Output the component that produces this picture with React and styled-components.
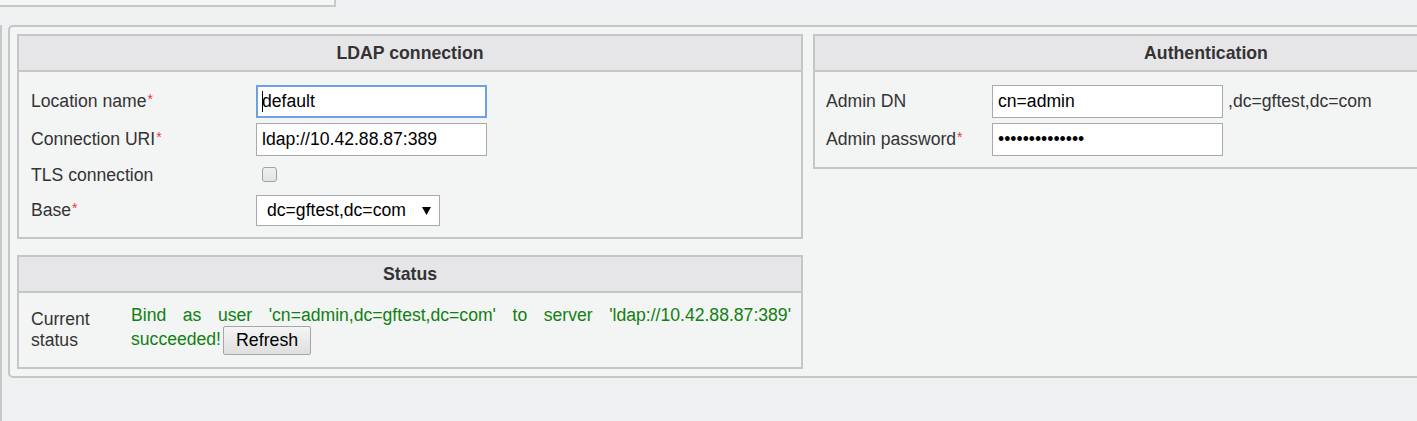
import styled, { createGlobalStyle } from 'styled-components'

const GlobalStyle = createGlobalStyle`
  html, body {
    margin: 0;
    padding: 0;
    background: #eff0f1;
    font-family: "Liberation Sans", Arial, sans-serif;
    color: #333;
    overflow: hidden;
  }
  * { box-sizing: border-box; }
`

const Page = styled.div`
  width: 1417px;
  height: 421px;
  overflow: hidden;
`

const TopStrip = styled.div`
  width: 336px;
  height: 7px;
  background: #f4f5f5;
  border-right: 2px solid #c8c8c8;
  border-bottom: 2px solid #c8c8c8;
`

const Frame = styled.div`
  margin-top: 18px;
  height: 396px;
  border-left: 2px solid #c8c8c8;
  padding-left: 6px;
`

const OuterPanel = styled.div`
  width: 1600px;
  display: flex;
  align-items: flex-start;
  gap: 10px;
  padding: 7px;
  background: #f3f4f4;
  border: 2px solid #c6c6c6;
  border-radius: 5px;
`

const Column = styled.div`
  width: 786px;
  display: flex;
  flex-direction: column;
  gap: 16px;
`

const Panel = styled.section`
  border: 2px solid #c6c6c6;
  background: #f3f4f4;
`

const PanelHeader = styled.div`
  height: 36px;
  display: flex;
  align-items: center;
  justify-content: center;
  background: #e6e6e8;
  border-bottom: 2px solid #c6c6c6;
  font-size: 17.7px;
  font-weight: 700;
  color: #333;
`

const FormBody = styled.div`
  display: flex;
  flex-direction: column;
  gap: 5px;
  padding: 13px 10px 11px ${p => p.$padLeft}px;
`

const Row = styled.div`
  display: grid;
  grid-template-columns: ${p => p.$labelWidth}px auto;
  justify-content: start;
  align-items: center;
  min-height: ${p => p.$height || 0}px;
`

const Label = styled.label`
  font-size: 17.6px;
  color: #333;
`

const Required = styled.span`
  color: #ee3344;
  font-size: 14px;
  vertical-align: top;
  margin-left: 1px;
`

const Field = styled.div`
  display: flex;
  align-items: center;
  position: relative;
`

const TextInput = styled.input`
  width: 231px;
  height: 33px;
  margin: 0;
  padding: 0 ${p => (p.$focused ? 4 : 5)}px;
  font-family: "Liberation Sans", Arial, sans-serif;
  font-size: 17.6px;
  color: #000;
  background: #fff;
  border: ${p => (p.$focused ? '2px solid #6ea0e6' : '1px solid #a9a9a9')};
  outline: none;
`

const Caret = styled.span`
  position: absolute;
  left: 6px;
  top: 6px;
  width: 1px;
  height: 21px;
  background: #000;
`

const Suffix = styled.span`
  margin-left: 5px;
  font-size: 17.6px;
  color: #333;
`

const Checkbox = styled.input`
  appearance: none;
  width: 15px;
  height: 15px;
  margin: -2px 0 0 6px;
  border: 1px solid #a0a0a0;
  border-radius: 3px;
  background: linear-gradient(#f0f0f0, #e3e3e3);
`

const SelectBox = styled.div`
  width: 184px;
  height: 31px;
  display: flex;
  align-items: center;
  justify-content: space-between;
  padding: 0 8px 0 10px;
  background: #fff;
  border: 1px solid #a9a9a9;
  font-size: 17.6px;
  color: #000;
`

const StatusBody = styled.div`
  display: grid;
  grid-template-columns: 100px 1fr;
  align-items: center;
  padding: 11px 10px 12px 12px;
`

const StatusLabel = styled.div`
  font-size: 17.6px;
  line-height: 21px;
  color: #333;
`

const StatusText = styled.div`
  font-size: 17.6px;
  line-height: 22px;
  color: #108010;
  text-align: justify;
`

const Button = styled.button`
  height: 29px;
  margin: 0 0 0 2px;
  padding: 0 12px;
  font-family: "Liberation Sans", Arial, sans-serif;
  font-size: 17.8px;
  color: #000;
  background: linear-gradient(#f5f5f5, #dfdfdf);
  border: 1px solid #a6a6a6;
  border-radius: 2px;
  vertical-align: middle;
`

const Arrow = () => (
  <svg width="9" height="8" viewBox="0 0 9 8">
    <path d="M0 0 H9 L4.5 8 Z" fill="#000" />
  </svg>
)

export default function App() {
  return (
    <>
      <GlobalStyle />
      <Page>
        <TopStrip />
        <Frame>
          <OuterPanel>
            <Column>
              <Panel>
                <PanelHeader>LDAP connection</PanelHeader>
                <FormBody $padLeft={12}>
                  <Row $labelWidth={225}>
                    <Label>Location name<Required>*</Required></Label>
                    <Field>
                      <TextInput $focused defaultValue="default" />
                      <Caret />
                    </Field>
                  </Row>
                  <Row $labelWidth={225}>
                    <Label>Connection URI<Required>*</Required></Label>
                    <Field>
                      <TextInput defaultValue="ldap://10.42.88.87:389" />
                    </Field>
                  </Row>
                  <Row $labelWidth={225} $height={29}>
                    <Label>TLS connection</Label>
                    <Field>
                      <Checkbox type="checkbox" />
                    </Field>
                  </Row>
                  <Row $labelWidth={225}>
                    <Label>Base<Required>*</Required></Label>
                    <SelectBox>
                      <span>dc=gftest,dc=com</span>
                      <Arrow />
                    </SelectBox>
                  </Row>
                </FormBody>
              </Panel>
              <Panel>
                <PanelHeader>Status</PanelHeader>
                <StatusBody>
                  <StatusLabel>Current status</StatusLabel>
                  <StatusText>
                    Bind as user 'cn=admin,dc=gftest,dc=com' to server 'ldap://10.42.88.87:389' succeeded!<Button>Refresh</Button>
                  </StatusText>
                </StatusBody>
              </Panel>
            </Column>
            <Column>
              <Panel>
                <PanelHeader>Authentication</PanelHeader>
                <FormBody $padLeft={11}>
                  <Row $labelWidth={166}>
                    <Label>Admin DN</Label>
                    <Field>
                      <TextInput defaultValue="cn=admin" />
                      <Suffix>,dc=gftest,dc=com</Suffix>
                    </Field>
                  </Row>
                  <Row $labelWidth={166}>
                    <Label>Admin password<Required>*</Required></Label>
                    <Field>
                      <TextInput type="password" defaultValue="gftestpassword" />
                    </Field>
                  </Row>
                </FormBody>
              </Panel>
            </Column>
          </OuterPanel>
        </Frame>
      </Page>
    </>
  )
}
